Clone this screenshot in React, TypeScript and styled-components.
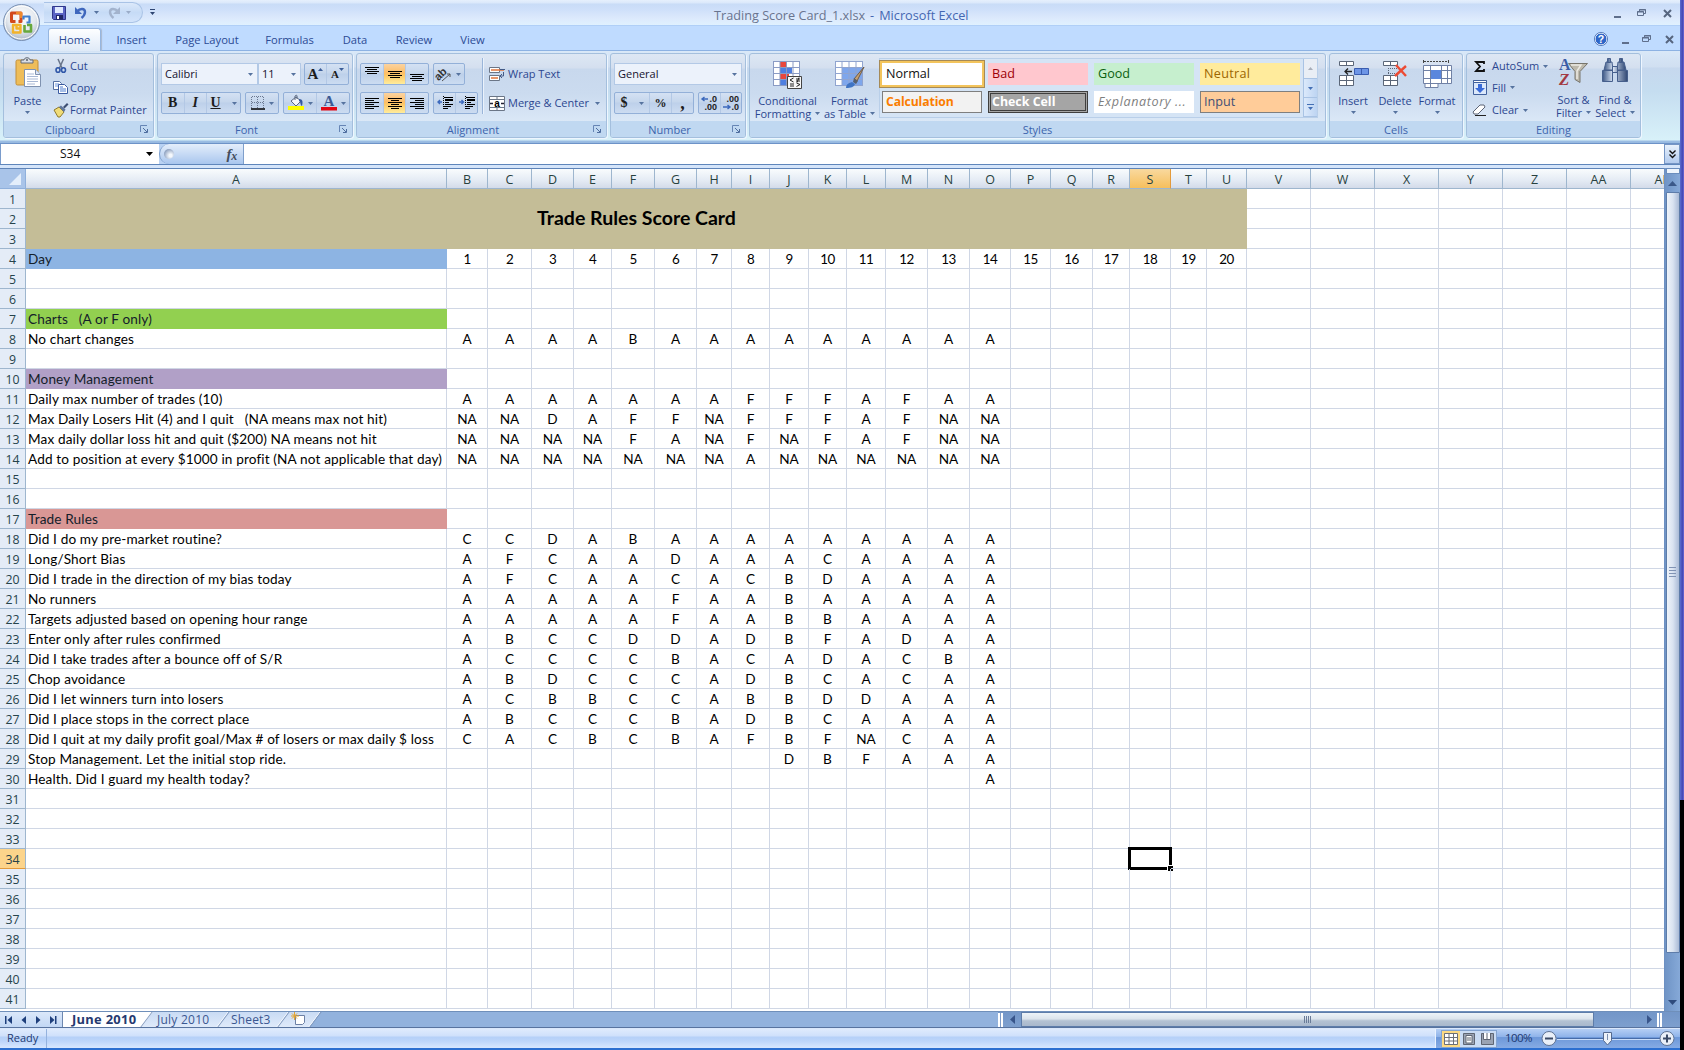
import React from "react";
import styled, { createGlobalStyle, css } from "styled-components";

const ui = '"Open Sans", "Noto Sans", sans-serif';
const calibri = 'Lato, "Open Sans", sans-serif';

const Global = createGlobalStyle`
  *, *::before, *::after { box-sizing: border-box; }
  body { margin: 0; overflow: hidden; }
  svg { display: block; flex: none; overflow: visible; }
`;

const Screen = styled.div`
  display: flex; width: 1684px; height: 1050px; overflow: hidden;
  font: 11px/14px ${ui}; color: #2c4790; background: #bfdbff; white-space: nowrap;
`;
const Edge = styled.div`
  width: 4px; height: 1050px;
  background: linear-gradient(90deg, #5c6ed0, #4549b4 60%, #6a6bd8) top / 4px 800px no-repeat, #000;
`;
const Win = styled.div`display: flex; flex-direction: column; width: 1680px; height: 1050px;`;

/* ---- title ---- */
const TitleBar = styled.header`
  position: relative; display: flex; height: 26px; border-bottom: 1px solid #b0cff7;
  background: linear-gradient(#e6f0fd 0, #dbe8fb 3px, #c9dcf7 4px, #cfe0fa 10px, #dce9fc 18px, #e0f1ff 25px);
`;
const Orb = styled.div`position: absolute; left: 1px; top: 2px; z-index: 2;`;
const Quick = styled.div`
  display: flex; align-items: center; width: 99px; height: 21px; margin: 2px 0 0 44px; padding: 0 0 0 8px;
  border: 1px solid #a9c3e6; border-left: 0; border-radius: 0 11px 11px 0;
  background: linear-gradient(#dce9fa, #c6dbf6 50%, #d3e4fb);
`;
const QuickMore = styled.div`padding: 9px 0 0 6px;`;
const Caption = styled.div`
  display: flex; gap: 5px; width: 260px; margin: 6px 0 0 558px; font-size: 12.7px; line-height: 18px; color: #69748f;
  b { font-weight: 400; color: #4467b2; }
`;
const WinButtons = styled.div<{ $top: number; $right: number; $gap: number }>`
  display: flex; gap: ${p => p.$gap}px; align-items: center; height: 14px; margin: ${p => p.$top}px ${p => p.$right}px 0 auto;
`;

/* ---- tabs ---- */
const Tabs = styled.nav`display: flex; height: 24px; padding: 2px 0 0 48px; background: #bfdbff;`;
const Tab = styled.div<{ $w: number; $on?: boolean }>`
  width: ${p => p.$w}px; height: 22px; padding-top: 4px; text-align: center; font-size: 11.2px; line-height: 15px; color: #2b4a94;
  ${p => p.$on && css`
    position: relative; z-index: 1; height: 23px; border: 1px solid #96b6e0; border-bottom: 0; border-radius: 3px 3px 0 0; padding-top: 3px;
    background: linear-gradient(#fdfeff, #eef4fc 50%, #dfeaf7); box-shadow: 1px 0 1px #a9b9d0;
  `}
`;

/* ---- ribbon ---- */
const Ribbon = styled.section`
  display: flex; gap: 3px; height: 94px; padding: 2px 0 0 3px; border-top: 1px solid #8db2e3; border-bottom: 1px solid #6d93c8;
  background: linear-gradient(#d9e8f8 0, #d0dff1 16px, #c6d8ee 17px, #c5ddf0 40px, #d8f1f9 89px, #9cbee4 90px, #93b5dd 93px);
`;
const Group = styled.div<{ $w: number }>`
  display: flex; flex-direction: column; width: ${p => p.$w}px; height: 85px; border: 1px solid #a4bfdd; border-radius: 3px;
  box-shadow: 1px 1px 0 #eef6ff; overflow: hidden;
  background: linear-gradient(#dde7f4 0, #d4dfef 14px, #c8d8ed 15px, #cbdbef 40px, #dbe8f7 68px);
`;
const GroupBody = styled.div<{ $p?: string }>`display: flex; height: 68px; padding: ${p => p.$p || "0"};`;
const GroupName = styled.div<{ $arrow?: boolean }>`
  display: flex; height: 16px; padding-right: 4px; align-items: center; line-height: 15px; color: #3c64ad; background: #c0d8f1;
  span { flex: 1; text-align: center; ${p => (p.$arrow ? "padding-right: 4px;" : "padding-left: 4px;")} }
`;
const Col = styled.div<{ $gap?: number; $w?: number; $ml?: number; $pt?: number }>`
  display: flex; flex-direction: column; gap: ${p => p.$gap || 0}px; margin-left: ${p => p.$ml || 0}px; padding-top: ${p => p.$pt || 0}px;
  ${p => p.$w && css`width: ${p.$w}px;`}
`;
const Row = styled.div<{ $gap?: number; $h?: number }>`
  display: flex; align-items: center; gap: ${p => p.$gap || 0}px; ${p => p.$h && css`height: ${p.$h}px;`}
`;
const Slot = styled.div<{ $w: number }>`display: flex; justify-content: center; width: ${p => p.$w}px;`;
const Big = styled.div<{ $w: number; $gap?: number }>`
  display: flex; flex-direction: column; align-items: center; width: ${p => p.$w}px; line-height: 13px;
  > svg:first-child { margin-bottom: ${p => p.$gap ?? 5}px; }
`;
const BigArrow = styled.div`padding-top: 4px;`;
const Combo = styled.div<{ $w: number }>`
  display: flex; align-items: center; justify-content: space-between; width: ${p => p.$w}px; height: 22px; padding: 0 4px 0 3px;
  border: 1px solid #b3c9e6; background: #ecf2fb; color: #16132e;
`;
const Cluster = styled.div<{ $w: number }>`
  display: flex; width: ${p => p.$w}px; height: 22px; border: 1px solid #93b0d8; border-radius: 2px;
  background: linear-gradient(#d4e1f3, #c5d6ec 45%, #bdd0ea 50%, #ccdcf1);
`;
const Btn = styled.div<{ $on?: boolean; $w?: number }>`
  display: flex; ${p => (p.$w ? css`width: ${p.$w}px;` : css`flex: 1;`)} align-items: center; justify-content: center; gap: 4px;
  & + & { border-left: 1px solid #b3c8e5; }
  ${p => p.$on && css`background: linear-gradient(#fbd3a0, #fdbd66 45%, #fdc765 55%, #ffec9c);`}
`;
const Glyph = styled.span<{ $i?: boolean; $u?: boolean; $s?: number }>`
  font: ${p => (p.$i ? "italic" : "normal")} bold ${p => p.$s || 14}px/16px "Liberation Serif", serif; color: #1c1c1c;
  ${p => p.$u && css`text-decoration: underline;`}
`;
const Sep = styled.div`width: 2px; height: 56px; margin: 4px 5px 0 4px; border-left: 1px solid #9ab5d9; border-right: 1px solid #eaf2fc;`;
const Gallery = styled.div`
  display: flex; height: 60px; margin: 4px 0 0; border: 1px solid #b9cfe9; background: #d5e4f5;
`;
const Swatches = styled.div`
  display: grid; grid-template-columns: repeat(4, 100px); grid-auto-rows: 22px; gap: 6px; padding: 4px 3px 4px 2px;
`;
const Swatch = styled.div<{ $bg: string; $fg: string; $kind?: string; $ls?: number }>`
  padding-left: 4px; background: ${p => p.$bg}; color: ${p => p.$fg}; font: 12.6px/21px ${ui}; letter-spacing: ${p => p.$ls || 0}px;
  ${p => p.$kind === "sel" && css`outline: 2px solid #f3c45c; box-shadow: 0 0 0 3px #a58a58;`}
  ${p => p.$kind === "box" && css`border: 1px solid #7f7f7f; padding-left: 3px; line-height: 20px;`}
  ${p => p.$kind === "calc" && css`border: 1px solid #7f7f7f; padding-left: 3px; line-height: 20px; font-weight: 700; font-size: 12.2px;`}
  ${p => p.$kind === "check" && css`border: 3px double #3f3f3f; padding-left: 1px; line-height: 15px; font-weight: 700; font-size: 12.4px;`}
  ${p => p.$kind === "em" && css`font-style: italic;`}
`;
const GalleryScroll = styled.div`
  display: grid; grid-template-rows: 20px 19px 19px; width: 14px;
  > div { display: flex; align-items: center; justify-content: center; border-left: 1px solid #a9c3e4; border-bottom: 1px solid #a9c3e4; background: linear-gradient(90deg, #dbe9fb, #bdd4f2); }
  > div:first-child { background: #e9eef5; }
`;

/* ---- formula bar ---- */
const FormulaBar = styled.div`display: flex; height: 21px; border-bottom: 1px solid #5f86bb; background: #b9d2f3;`;
const NameBox = styled.div`
  display: flex; align-items: center; width: 159px; padding: 0 6px 0 59px; justify-content: space-between; border-left: 1px solid #7a9ccc;
  background: #fff; color: #111; font-size: 12px;
`;
const FxArea = styled.div`
  display: flex; align-items: center; justify-content: space-between; width: 85px; padding: 0 6px 0 4px; border: 1px solid #7f9fcb; border-width: 0 1px 0 1px;
  border-radius: 10px 0 0 10px; background: linear-gradient(#e4eefb, #a9c6ee);
`;
const Knob = styled.div`width: 10px; height: 10px; border-radius: 50%; background: radial-gradient(circle at 65% 65%, #f4f8fd 15%, #8c9fbe 75%);`;
const Fx = styled.span`font: italic bold 15px/18px "Liberation Serif", serif; color: #454d5c; letter-spacing: -0.3px; sub { font-size: 12px; line-height: 1; vertical-align: -1px; }`;
const FormulaInput = styled.div`flex: 1; background: #fff;`;
const Expand = styled.div`
  display: flex; align-items: center; justify-content: center; width: 16px; border: 1px solid #7595c4; background: linear-gradient(#e8f1fc, #b2cbee);
`;

/* ---- sheet ---- */
const SheetArea = styled.main`display: flex; height: 846px; padding-top: 3px; background: #d5e5fa;`;
const Grid = styled.div<{ $cols: string }>`
  display: grid; grid-template-columns: ${p => p.$cols}; grid-template-rows: 20px repeat(41, 20px) 2px;
  width: 1664px; height: 843px; overflow: hidden; background: #fff; border-top: 1px solid #5f84b8;
`;
const Corner = styled.div`
  display: flex; justify-content: flex-end; align-items: flex-end; padding: 0 4px 3px 0; border: 1px solid #8fb0dc; border-width: 0 1px 1px 0; background: #a9c4e9;
`;
const ColHead = styled.div<{ $on?: boolean }>`
  border-right: 1px solid ${p => (p.$on ? "#e39a3b" : "#9eb6ce")}; border-bottom: 1px solid #9eb6ce; text-align: center; overflow: hidden;
  font: 12.5px/21px ${ui}; color: #27413e;
  background: ${p => (p.$on ? "linear-gradient(#f9d99f, #f6bf5c)" : "linear-gradient(#f9fcfd, #e4ebf4 60%, #d3dbe9)")};
`;
const RowHead = styled.div<{ $on?: boolean }>`
  border-right: 1px solid #9eb6ce; border-bottom: 1px solid ${p => (p.$on ? "#e39a3b" : "#9eb6ce")}; text-align: center;
  font: 12.3px/21px ${ui}; color: #26434b; background: ${p => (p.$on ? "#fcd48b" : "#e4ecf7")};
`;
const Banner = styled.div`
  grid-column: 2 / span 21; grid-row: 2 / span 3; display: flex; align-items: center; justify-content: center; background: #c4bd97;
  padding-bottom: 2px; color: #000; font: 700 19.5px/24px ${calibri};
`;
const Cell = styled.div<{ $bg?: string; $text?: boolean; $num?: boolean }>`
  position: relative; border-right: 1px solid #d0d7e5; border-bottom: 1px solid #d0d7e5; color: #000; font: 13.6px/20px ${calibri};
  text-align: ${p => (p.$text ? "left" : "center")}; white-space: pre;
  ${p => p.$num && css`letter-spacing: -0.6px; font-size: 13.4px;`}
  ${p => p.$text && css`padding-left: 2px; letter-spacing: 0.135px;`}
  ${p => p.$bg && css`background: ${p.$bg}; border-color: ${p.$bg}; color: #14202a;`}
`;
const Selection = styled.div`
  position: absolute; left: -2px; top: -2px; right: -2px; bottom: -2px; border: 3px solid #000;
  &::after { content: ""; position: absolute; right: -4px; bottom: -4px; width: 5px; height: 5px; background: #000; box-shadow: -1px -1px 0 #fff; }
`;
const VScroll = styled.div`
  display: flex; flex-direction: column; align-items: center; width: 16px; border-left: 1px solid #6d90c2; background: linear-gradient(90deg, #6f94c6, #86a9d8);
`;
const SplitBox = styled.div`width: 14px; height: 6px; border: 1px solid #6a8dbd; background: #eef5fd;`;
const VThumb = styled.div`
  display: flex; flex-direction: column; align-items: center; justify-content: center; gap: 1px; width: 14px; height: 761px; border: 1px solid #5d7ca9; border-radius: 1px;
  background: linear-gradient(90deg, #eef3fa, #d9e3f1 50%, #a9bad6);
`;
const GripV = styled.i`width: 7px; height: 1px; background: #8093b4; margin-bottom: 1px;`;
const ArrowBox = styled.div<{ $h: number }>`display: flex; align-items: center; height: ${p => p.$h}px;`;

/* ---- bottom ---- */
const TabStrip = styled.div`display: flex; height: 17px; border-bottom: 1px solid #58739f; border-top: 1px solid #6f8fba; background: #92b2dd;`;
const Nav = styled.div`
  display: flex; align-items: center; justify-content: space-around; width: 63px; padding: 0 2px; border-right: 1px solid #6e88b0; background: linear-gradient(#dbe8fa, #c2d7f4);
`;
const SheetTab = styled.div<{ $w: number; $on?: boolean; $z: number; $pl: number; $ls?: number }>`
  position: relative; z-index: ${p => p.$z}; width: ${p => p.$w}px; padding-left: ${p => p.$pl}px; font: ${p => (p.$on ? "700 12.9px" : "12px")}/15px ${ui};
  letter-spacing: ${p => p.$ls || 0}px; color: ${p => (p.$on ? "#25396f" : "#3b5791")};
  &::before {
    content: ""; position: absolute; z-index: -1; top: 0; bottom: 0; left: ${p => (p.$on ? 12 : -6)}px; right: 0; transform: skewX(-37deg);
    background: ${p => (p.$on ? "#fff" : "linear-gradient(#c9dbf4, #dfeafa)")}; border-right: 1px solid #7d95bb; box-shadow: ${p => (p.$on ? "none" : "inset -1px 0 0 #fff")};
  }
  ${p => p.$on && css`background: linear-gradient(#fff, #fff) 0 0 / 50px 100% no-repeat;`}
`;
const HScroll = styled.div`display: flex; align-items: center; width: 682px; margin-left: auto; background: linear-gradient(#7396c8, #7d9fce);`;
const Splitter = styled.div`width: 5px; height: 14px; border: 1px solid #fff; border-width: 0 2px; background: #7f9cc8;`;
const HTrack = styled.div`
  display: flex; align-items: center; justify-content: center; gap: 1px; width: 573px; height: 15px; border: 1px solid #5d7ca9;
  background: linear-gradient(#edf3f8, #dce4ec 45%, #b4c2d3 60%, #a9b8cc);
`;
const GripH = styled.i`width: 1px; height: 7px; background: #697b97;`;
const Gap = styled.div<{ $w: number }>`display: flex; justify-content: center; width: ${p => p.$w}px;`;
const StatusBar = styled.footer`
  display: flex; height: 22px; border-bottom: 2px solid #2c6fd0; border-top: 1px solid #dbe8fb;
  background: linear-gradient(#dfebfd 0, #cfe0fb 7px, #b5d0f8 8px, #bcd5fa 12px, #d8e7fe 19px);
`;
const Ready = styled.div`width: 47px; padding: 1px 0 0 7px; border-right: 1px solid #94b2de; color: #1d3a72; line-height: 15px;`;
const StatusRight = styled.div`
  display: flex; align-items: center; width: 245px; margin-left: auto; padding-left: 5px; border-left: 1px solid #e9f2ff;
  background: linear-gradient(#b5cff5, #90b4ea 40%, #6d98d9 45%, #86abe4);
`;
const Views = styled.div`display: flex; width: 56px; height: 18px; border: 1px solid #83a3d0; background: #cadcf4;`;
const View = styled.div<{ $on?: boolean }>`display: flex; flex: 1; align-items: center; justify-content: center; ${p => p.$on && css`background: #fbd983;`}`;
const Zoom = styled.div`width: 43px; padding-left: 8px; color: #1c3870; font-size: 11.5px; line-height: 14px; padding-bottom: 1px; letter-spacing: -0.6px;`;

/* ---- icons ---- */
const Dn = ({ c = "#56739f", s = 5 }: { c?: string; s?: number }) => (
  <svg width={s} height={Math.ceil(s / 2)} viewBox="0 0 6 3" preserveAspectRatio="none"><path d="M0 0h6L3 3z" fill={c} /></svg>
);
const Launch = () => (
  <svg width="9" height="9" fill="none" stroke="#6685b5"><path d="M.5 7V.5H7" /><path d="M3 3l4 4M7.500 4v3.500H4" stroke="#4e6d9f" /></svg>
);
const WinSet = () => (<>
  <svg width="8" height="10"><path d="M1 8h7v2H1z" fill="#5f6f8c" /></svg>
  <svg width="10" height="9" fill="none" stroke="#5f6f8c"><path d="M2.500 2V.5h6v4H7" /><path d="M.5 2.500h6v4h-6z" /><path d="M0 3h7M2 1h7" /></svg>
  <svg width="9" height="9" stroke="#56657f" strokeWidth="2"><path d="M1 1l7 7M8 1L1 8" /></svg>
</>);
const OrbIcon = () => (
  <svg width="40" height="40">
    <defs><radialGradient id="orb" cx=".5" cy=".35" r=".65"><stop offset="0" stopColor="#fff" /><stop offset=".6" stopColor="#e3e8ee" /><stop offset="1" stopColor="#a9b5c4" /></radialGradient></defs>
    <circle cx="20.500" cy="20.500" r="18" fill="url(#orb)" stroke="#7890b4" />
    <circle cx="20.500" cy="20.500" r="16.500" fill="none" stroke="#fff" />
    <g fill="none" strokeLinejoin="round">
      <path d="M14.500 19.500h-4v-8.500h9.500v8.500h-2.500" stroke="#d2481d" strokeWidth="3" /><path d="M15 11h5v5" stroke="#ee8a2c" strokeWidth="2.400" />
      <path d="M22.500 17.500v-3h6v6h-3" stroke="#3f7fd0" strokeWidth="2.200" />
      <path d="M12 23h7.500v7.500H12zM15.500 23v3.500H20" stroke="#f2b32b" strokeWidth="2.400" /><path d="M23.500 23v6.500h6.500V23h-4" stroke="#67a83c" strokeWidth="2.600" />
    </g>
  </svg>
);
const Save = () => (
  <svg width="14" height="14"><path d="M.5.5h13v13h-12l-1-1z" fill="#5a64c4" stroke="#30388c" /><path d="M3 1h8v6H3z" fill="#dfe9ff" /><path d="M4 9h7v4.500H4z" fill="#1f2766" /><path d="M5 10h2v3H5z" fill="#fff" /></svg>
);
const Undo = ({ c, flip }: { c: string; flip?: boolean }) => (
  <svg width="14" height="13"><g transform={flip ? "translate(14 0) scale(-1 1)" : undefined}><path d="M3 5.500C6 2 11 2 11 6c0 2-1 4-3.500 6" fill="none" stroke={c} strokeWidth="2.400" /><path d="M1 1v7h7z" fill={c} /></g></svg>
);
const PasteIcon = () => (
  <svg width="28" height="31"><rect x="2" y="3" width="22" height="25" rx="1.500" fill="#eebd59" stroke="#c28f3a" /><path d="M7 6V3h3c0-3 6-3 6 0h3v3z" fill="#d9dde3" stroke="#626b78" /><circle cx="13" cy="3" r="1" fill="#59616e" />
    <path d="M10.500 12.500h11l5 5v12h-16z" fill="#fff" stroke="#7f92b0" /><path d="M21.500 12.500v5h5" fill="#dbe5f5" stroke="#7f92b0" /><path d="M13 17h7M13 19.500h11M13 22h11M13 24.500h11M13 27h8" stroke="#a9b9d5" /></svg>
);
const CutIcon = () => (
  <svg width="12" height="14" fill="none"><path d="M3 0l4 9M8.500 0L4.500 9" stroke="#69758a" strokeWidth="1.500" /><ellipse cx="3" cy="11" rx="2" ry="2.300" stroke="#3057a8" strokeWidth="1.600" /><ellipse cx="8.500" cy="11" rx="2" ry="2.300" stroke="#3057a8" strokeWidth="1.600" /></svg>
);
const CopyIcon = () => (
  <svg width="15" height="13"><path d="M.5.5h6l2 2v6h-8z" fill="#fff" stroke="#5470a3" /><path d="M2 3h4M2 5h3" stroke="#6f97dc" /><path d="M5.500 3.500h6l3 3v6h-9z" fill="#fff" stroke="#3a5aa0" /><path d="M7 6h3M7 8h6M7 10h6" stroke="#4f7ed0" /></svg>
);
const BrushIcon = () => (
  <svg width="16" height="14"><path d="M1 7l5-3 5 5-4 5H5z" fill="#f0dc78" stroke="#8e7a2d" /><path d="M6 4l2-1.500 4.500 4L11 9z" fill="#61779d" /><path d="M10 4l4-4 1.500 1.500-4 4z" fill="#3d4e72" /></svg>
);
const BorderIcon = () => (
  <svg width="14" height="14" stroke="#6b7890"><path d="M1 .5h12M1 6.500h12M.5 1v11M6.500 1v11M12.500 1v11" strokeDasharray="1 1" /><path d="M0 13h14" strokeWidth="1.500" stroke="#000" /></svg>
);
const BucketIcon = () => (
  <svg width="16" height="16"><path d="M3 6l5-4 5 4-5 5z" fill="#f4f6fa" stroke="#59667f" /><path d="M7 5V1c1-1 2-1 2 0v3" fill="none" stroke="#59667f" /><path d="M11 4c4 0 4 3 3 7-2-1-1-4-3-5z" fill="#34589f" /><path d="M0 11h16v4H0z" fill="#ff0" /></svg>
);
const FontColor = () => (
  <svg width="16" height="16"><text x="8" y="11" textAnchor="middle" fontFamily="Liberation Serif" fontWeight="700" fontSize="15" fill="#3c5a93">A</text><path d="M0 12h16v3.500H0z" fill="#e30613" /></svg>
);
const Lines = ({ rows, y = 0 }: { rows: [number, number][]; y?: number }) => (
  <svg width="14" height="15" stroke="#000">{rows.map(([a, b], i) => <path key={i} d={`M${a} ${y + i * 2 + 0.5}H${b}`} />)}</svg>
);
const full: [number, number] = [0, 14];
const shortRow: [number, number] = [2, 12];
const Indent = ({ right }: { right?: boolean }) => (
  <svg width="16" height="14"><path d="M7 1h9v1H7zM8 3h8v2H8zM8 6h4v1H8zM8 8h8v1H8zM7 10h7v1H7zM7 12h4v1H7z" fill="#000" /><path d="M6.500 0v14" stroke="#000" strokeDasharray="1 1" /><path d={right ? "M0 6h4M2.500 4L4.500 6 2.500 8" : "M1 6h4M3 4L1 6l2 2"} stroke="#3c69bd" strokeWidth="1.400" fill="none" /></svg>
);
const OrientIcon = () => (
  <svg width="15" height="15"><text x="-2" y="10" transform="rotate(-45 5 8)" fontFamily="Liberation Sans" fontWeight="700" fontSize="11" fill="#333">ab</text><path d="M5 14l8-7M10 7h3v3" fill="none" stroke="#555" /></svg>
);
const WrapIcon = () => (
  <svg width="16" height="15"><path d="M.5.500h10v5H.5zM.5 8.500h10v5H.5z" fill="#fff" stroke="#6b7687" /><path d="M2 3h13M2 11h7" stroke="#e0743c" strokeWidth="1.500" /><path d="M11 2.500h5M14.500 5v4h-3M13 7l-2 2 2 2" fill="none" stroke="#445a86" /></svg>
);
const MergeIcon = () => (
  <svg width="16" height="15"><path d="M.5.500h15v14H.5z" fill="#fff" stroke="#6b7687" /><path d="M0 3.500h16M0 11.500h16M8 0v3M8 12v3" stroke="#6b7687" /><text x="8" y="10.500" textAnchor="middle" fontFamily="Liberation Sans" fontWeight="700" fontSize="10" fill="#000">a</text><path d="M1 7.500h3M12 7.500h3" stroke="#223" strokeWidth="1.500" /></svg>
);
const Decimals = ({ a, b, left }: { a: string; b: string; left?: boolean }) => (
  <svg width="18" height="16"><g fontFamily="Liberation Sans" fontWeight="700" fontSize="9" fill="#222"><text x="17" y="7" textAnchor="end">{a}</text><text x="17" y="15" textAnchor="end">{b}</text></g>
    <path d={left ? "M2 4h6M4.500 2L2 4l2.500 2" : "M1 12h7M5.500 10L8 12l-2.500 2"} fill="none" stroke="#3c69bd" strokeWidth="1.400" /></svg>
);
const CondIcon = () => (
  <svg width="31" height="29"><path d="M1.500 1.500h26v24h-26z" fill="#fff" /><path d="M8 1h6v6H8zM8 13h9v6H8z" fill="#e8473c" /><path d="M8 7h12v6H8zM8 19h7v6H8z" fill="#4f7fe0" /><path d="M1.500 1v25M8 1v25M14.500 1v25M21 1v25M27.500 1v25M1 1.500h27M1 7.500h27M1 13.500h27M1 19.500h27M1 25.500h27" stroke="#8a9bc4" fill="none" />
    <path d="M15.500 16.500h14v12h-14z" fill="#f7f7f7" stroke="#444" /><path d="M21.500 18l-3.500 2 3.500 2M18 24h4M18 26h4M24 19h4M24 21h4M27 17.500l-2 5M24.500 23l3.500 1.500-3.500 2" fill="none" stroke="#222" /></svg>
);
const TableIcon = () => (
  <svg width="31" height="29"><path d="M1.500 1.500h27v24h-27z" fill="#fff" /><path d="M8 7h20v18H8z" fill="#7ea6ec" /><path d="M1.500 1v25M8 1v25M15 1v25M22 1v25M28.500 1v25M1 1.500h28M1 7.500h28M1 13.500h28M1 19.500h28M1 25.500h28" stroke="#90a4cf" fill="none" />
    <path d="M30 7L20 19l3 2z" fill="#c7a172" stroke="#6f5b45" /><path d="M20 18l4 3-2 3-3-2z" fill="#555f6e" /><path d="M12 28c0-4 3-5 6-6l3 2c-1 3-4 4-9 4z" fill="#3f74c4" /></svg>
);
const InsertIcon = () => (
  <svg width="31" height="27" fill="#fff" stroke="#5b6678"><path d="M1.500 1.500h14v4h-14zM8.500 1v5M1.500 15.500h14v10h-14zM8.500 15v11M1 20.500h15" /><path d="M16.500 8.500h14v6h-14z" fill="#6d95e6" stroke="#3a5db0" /><path d="M23.500 8v7" stroke="#3a5db0" /><path d="M7 11.500h7M10 8.500l-3 3 3 3" fill="none" stroke="#222" strokeWidth="1.300" /></svg>
);
const DeleteIcon = () => (
  <svg width="26" height="27" fill="#fff" stroke="#5b6678"><path d="M1.500 1.500h14v4h-14zM8.500 1v5M1.500 15.500h14v10h-14zM8.500 15v11M1 20.500h15" /><path d="M6 8.500h9M6 13.500h9M6.500 8v6" strokeDasharray="1 1" /><path d="M14 5l10 11M24 6L13 16" stroke="#ec4b34" strokeWidth="2.400" /></svg>
);
const FormatIcon = () => (
  <svg width="31" height="30" fill="#fff" stroke="#7081a5"><path d="M1.500 5.500h28v18h-28zM3 23.500h13v4H3zM1 10.500h29M1 18.500h29M8.500 5v22M19.500 5v19M25.500 5v19" /><path d="M9 10h10v9H9z" fill="#5b87dd" stroke="none" /><path d="M2 1.500h24" stroke="#444" strokeDasharray="2 1" /><path d="M1.500 0v3M26.500 0v3" stroke="#444" /></svg>
);
const SumIcon = () => <svg width="10" height="11"><path d="M9 3V1H1l4 4.500L1 10h8V8" fill="none" stroke="#111" strokeWidth="1.800" /></svg>;
const FillIcon = () => <svg width="14" height="15"><path d="M.5.5h13v14H.5z" fill="#dbe8fb" stroke="#41619e" /><path d="M.5.500h13v2H.5z" fill="#fff" stroke="#41619e" /><path d="M5 4h4v4h3l-5 5-5-5h3z" fill="#3a6bd8" /></svg>;
const ClearIcon = () => <svg width="15" height="12"><path d="M1 8l7-7h4l1 2-7 7H2z" fill="#fff" stroke="#5c6577" /><path d="M6 10l7-7" stroke="#5c6577" /><path d="M3 11.500h11" stroke="#222" /></svg>;
const SortIcon = () => (
  <svg width="32" height="31"><text x="1" y="13" fontFamily="Liberation Serif" fontWeight="700" fontSize="16" fill="#3b5da6">A</text><text x="1" y="28" fontFamily="Liberation Serif" fontStyle="italic" fontWeight="700" fontSize="17" fill="#a33a42">Z</text>
    <path d="M10.500 6.500h19l-7.500 8v11l-5-3v-8z" fill="#bdb9ac" stroke="#77756c" /><path d="M13 8h10l-4 6v8" fill="none" stroke="#eceae3" strokeWidth="1.500" /></svg>
);
const FindIcon = () => (
  <svg width="28" height="27"><defs><linearGradient id="bn"><stop offset="0" stopColor="#3b5684" /><stop offset=".4" stopColor="#d5e1f2" /><stop offset="1" stopColor="#2e4673" /></linearGradient></defs>
    <g fill="url(#bn)" stroke="#465f8c"><path d="M5 5h6l1 8H3zM17 5h6l2 8h-9z" /><path d="M1.500 13.500h10v11h-10zM16.500 13.500h10v11h-10z" /><path d="M6.500 1.500h3v4h-3zM18.500 1.500h3v4h-3zM11.500 9.500h5v6h-5z" /></g></svg>
);
const Help = () => <svg width="14" height="14"><circle cx="7" cy="7" r="6" fill="#2f66c8" stroke="#fff" /><circle cx="7" cy="7" r="6.600" fill="none" stroke="#3f67ad" strokeWidth=".8" /><text x="7" y="11" textAnchor="middle" fontFamily="Liberation Sans" fontWeight="700" fontSize="10.500" fill="#fff">?</text></svg>;
const NavIcon = ({ d }: { d: string }) => <svg width="8" height="8"><path d={d} fill="#1e3f7c" /></svg>;

/* ---- data ---- */
const edges = [26, 447, 488, 532, 574, 612, 655, 697, 732, 770, 809, 847, 886, 928, 970, 1011, 1051, 1093, 1130, 1171, 1207, 1247, 1311, 1375, 1439, 1503, 1567, 1631, 1695];
const names = "A B C D E F G H I J K L M N O P Q R S T U V W X Y Z AA AB".split(" ");
const cols = ["26px", ...edges.slice(1).map((e, i) => `${e - edges[i]}px`)].join(" ");
const labels: Record<number, [string, string?]> = {
  4: ["Day", "#8db4e3"], 7: ["Charts   (A or F only)", "#92d050"], 8: ["No chart changes"], 10: ["Money Management", "#b1a0c7"],
  11: ["Daily max number of trades (10)"], 12: ["Max Daily Losers Hit (4) and I quit   (NA means max not hit)"],
  13: ["Max daily dollar loss hit and quit ($200) NA means not hit"], 14: ["Add to position at every $1000 in profit (NA not applicable that day)"],
  17: ["Trade Rules", "#d99795"], 18: ["Did I do my pre-market routine?"], 19: ["Long/Short Bias"], 20: ["Did I trade in the direction of my bias today"],
  21: ["No runners"], 22: ["Targets adjusted based on opening hour range"], 23: ["Enter only after rules confirmed"],
  24: ["Did I take trades after a bounce off of S/R"], 25: ["Chop avoidance"], 26: ["Did I let winners turn into losers"],
  27: ["Did I place stops in the correct place"], 28: ["Did I quit at my daily profit goal/Max # of losers or max daily $ loss"],
  29: ["Stop Management. Let the initial stop ride."], 30: ["Health. Did I guard my health today?"],
};
const grades: Record<number, string> = {
  4: "1 2 3 4 5 6 7 8 9 10 11 12 13 14 15 16 17 18 19 20",
  8: "A A A A B A A A A A A A A A", 11: "A A A A A A A F F F A F A A", 12: "NA NA D A F F NA F F F A F NA NA",
  13: "NA NA NA NA F A NA F NA F A F NA NA", 14: "NA NA NA NA NA NA NA A NA NA NA NA NA NA",
  18: "C C D A B A A A A A A A A A", 19: "A F C A A D A A A C A A A A", 20: "A F C A A C A C B D A A A A",
  21: "A A A A A F A A B A A A A A", 22: "A A A A A F A A B B A A A A", 23: "A B C C D D A D B F A D A A",
  24: "A C C C C B A C A D A C B A", 25: "A B D C C C A D B C A C A A", 26: "A C B B C C A B B D D A A A",
  27: "A B C C C B A D B C A A A A", 28: "C A C B C B A F B F NA C A A", 29: ". . . . . . . . D B F A A A", 30: ". . . . . . . . . . . . . A",
};

const Sheet = () => (
  <Grid $cols={cols}>
    <Corner><svg width="12" height="12"><path d="M12 0v12H0z" fill="#e3eefb" /></svg></Corner>
    {names.map(n => <ColHead key={n} $on={n === "S"}>{n}</ColHead>)}
    <Banner>Trade Rules Score Card</Banner>
    {Array.from({ length: 41 }, (_, i) => i + 1).map(r => {
      const g = (grades[r] || "").split(" ");
      return (
        <React.Fragment key={r}>
          <RowHead $on={r === 34} style={{ gridRow: r + 1, gridColumn: 1 }}>{r}</RowHead>
          {names.map((n, c) => {
            if (r < 4 && c < 21) return null;
            const at = { gridRow: r + 1, gridColumn: c + 2 };
            if (c === 0) return <Cell key={n} $text $bg={labels[r]?.[1]} style={at}>{labels[r]?.[0]}</Cell>;
            const v = g[c - 1];
            return <Cell key={n} $num={r === 4} style={at}>{v && v !== "." ? v : null}{r === 34 && n === "S" && <Selection />}</Cell>;
          })}
        </React.Fragment>
      );
    })}
  </Grid>
);

const Name = ({ children, arrow = true }: { children: string; arrow?: boolean }) => (
  <GroupName $arrow={arrow}><span>{children}</span>{arrow && <Launch />}</GroupName>
);

export default function App() {
  return (
    <Screen>
      <Global />
      <Win>
        <TitleBar>
          <Orb><OrbIcon /></Orb>
          <Quick>
            <Row $gap={8}><Save /><Row $gap={6}><Undo c="#3f67bd" /><Dn /></Row><Row $gap={5}><Undo c="#a3b3cd" flip /><Dn c="#9aacc8" /></Row></Row>
          </Quick>
          <QuickMore><svg width="7" height="7"><path d="M1 0h5v1H1zM1 3h5L3.500 6z" fill="#2f4673" /></svg></QuickMore>
          <Caption><span>Trading Score Card_1.xlsx</span><b>-</b><b>Microsoft Excel</b></Caption>
          <WinButtons $top={6} $right={8} $gap={16}><WinSet /></WinButtons>
        </TitleBar>
        <Tabs>
          <Tab $w={53} $on>Home</Tab><Tab $w={61}>Insert</Tab><Tab $w={90}>Page Layout</Tab><Tab $w={75}>Formulas</Tab>
          <Tab $w={56}>Data</Tab><Tab $w={62}>Review</Tab><Tab $w={55}>View</Tab>
          <WinButtons $top={4} $right={6} $gap={13}><Help /><WinSet /></WinButtons>
        </Tabs>
        <Ribbon>
          <Group $w={151}>
            <GroupBody $p="3px 0 0 5px">
              <Big $w={37} $gap={6}><PasteIcon /><span>Paste</span><BigArrow><Dn /></BigArrow></Big>
              <Col $ml={5}>
                <Row $h={18}><Slot $w={19}><CutIcon /></Slot><span>Cut</span></Row>
                <Row $h={25}><Slot $w={19}><CopyIcon /></Slot><span>Copy</span></Row>
                <Row $h={20}><Slot $w={19}><BrushIcon /></Slot><span>Format Painter</span></Row>
              </Col>
            </GroupBody>
            <Name>Clipboard</Name>
          </Group>
          <Group $w={196}>
            <GroupBody $p="9px 0 0 3px">
              <Col $gap={7}>
                <Row>
                  <Combo $w={97}>Calibri<Dn /></Combo><Combo $w={43}>11<Dn /></Combo><Gap $w={3} />
                  <Cluster $w={45}><Btn><Row><Glyph $s={15}>A</Glyph><svg width="5" height="12"><path d="M0 3h5L2.500 0z" fill="#3b5d99" /></svg></Row></Btn><Btn><Row><Glyph $s={11}>A</Glyph><svg width="5" height="12"><path d="M0 0h5L2.500 3z" fill="#3b5d99" /></svg></Row></Btn></Cluster>
                </Row>
                <Row $gap={4}>
                  <Cluster $w={80}><Btn><Glyph>B</Glyph></Btn><Btn><Glyph $i>I</Glyph></Btn><Btn $w={34}><Glyph $u>U</Glyph><Gap $w={3} /><Dn /></Btn></Cluster>
                  <Cluster $w={34}><Btn><BorderIcon /><Dn /></Btn></Cluster>
                  <Cluster $w={67}><Btn><BucketIcon /><Dn /></Btn><Btn><FontColor /><Dn /></Btn></Cluster>
                </Row>
              </Col>
            </GroupBody>
            <Name>Font</Name>
          </Group>
          <Group $w={251}>
            <GroupBody $p="0 0 0 3px">
              <Col $gap={7} $pt={9}>
                <Row $gap={4}>
                  <Cluster $w={69}><Btn><Lines rows={[full, shortRow, full, shortRow]} /></Btn><Btn $on><Lines y={4} rows={[full, shortRow, full, shortRow]} /></Btn><Btn><Lines y={7} rows={[full, shortRow, full, shortRow]} /></Btn></Cluster>
                  <Cluster $w={32}><Btn><OrientIcon /><Dn /></Btn></Cluster>
                </Row>
                <Row $gap={4}>
                  <Cluster $w={69}>
                    <Btn><Lines y={2} rows={[full, [0, 9], full, [0, 9], full, [0, 9]]} /></Btn>
                    <Btn $on><Lines y={2} rows={[full, [3, 11], full, [3, 11], full, [3, 11]]} /></Btn>
                    <Btn><Lines y={2} rows={[full, [5, 14], full, [5, 14], full, [5, 14]]} /></Btn>
                  </Cluster>
                  <Cluster $w={45}><Btn><Indent /></Btn><Btn><Indent right /></Btn></Cluster>
                </Row>
              </Col>
              <Sep />
              <Col>
                <Row $h={40} $gap={3}><WrapIcon /><span>Wrap Text</span></Row>
                <Row $h={18} $gap={3}><MergeIcon /><span>Merge &amp; Center</span><Gap $w={0} /><Dn /></Row>
              </Col>
            </GroupBody>
            <Name>Alignment</Name>
          </Group>
          <Group $w={136}>
            <GroupBody $p="9px 0 0 3px">
              <Col $gap={7}>
                <Combo $w={128}>General<Dn /></Combo>
                <Row $gap={4}>
                  <Cluster $w={80}><Btn $w={34}><Glyph>$</Glyph><Gap $w={3} /><Dn /></Btn><Btn><Glyph $s={12}>%</Glyph></Btn><Btn><Glyph $s={18}>,</Glyph></Btn></Cluster>
                  <Cluster $w={44}><Btn><Decimals a=".0" b=".00" left /></Btn><Btn><Decimals a=".00" b=".0" /></Btn></Cluster>
                </Row>
              </Col>
            </GroupBody>
            <Name>Number</Name>
          </Group>
          <Group $w={577}>
            <GroupBody>
              <Col $w={75} $pt={6}><Big $w={75}><CondIcon /><span>Conditional</span><Row $gap={4}>Formatting<Dn /></Row></Big></Col>
              <Col $w={54} $pt={6}><Big $w={49}><TableIcon /><span>Format</span><Row $gap={4}>as Table<Dn /></Row></Big></Col>
              <Gallery>
                <Swatches>
                  <Swatch $bg="#fff" $fg="#111" $kind="sel">Normal</Swatch><Swatch $bg="#ffc7ce" $fg="#9c0006">Bad</Swatch>
                  <Swatch $bg="#c6efce" $fg="#0b6110">Good</Swatch><Swatch $bg="#ffeb9c" $fg="#9c6500" $ls={0.3}>Neutral</Swatch>
                  <Swatch $bg="#f2f2f2" $fg="#fa7d00" $kind="calc" $ls={-0.1}>Calculation</Swatch><Swatch $bg="#a5a5a5" $fg="#fff" $kind="check" $ls={0}>Check Cell</Swatch>
                  <Swatch $bg="#fff" $fg="#7f7f7f" $kind="em" $ls={0.6}>Explanatory ...</Swatch><Swatch $bg="#ffcc99" $fg="#3f4f76" $kind="box">Input</Swatch>
                </Swatches>
                <GalleryScroll>
                  <div><svg width="5" height="3"><path d="M0 3h5L2.500 0z" fill="#a8aeb9" /></svg></div><div><Dn c="#4470b5" /></div>
                  <div><svg width="7" height="7"><path d="M0 0h7v1H0zM1 3h5L3.500 6z" fill="#4470b5" /></svg></div>
                </GalleryScroll>
              </Gallery>
            </GroupBody>
            <Name arrow={false}>Styles</Name>
          </Group>
          <Group $w={134}>
            <GroupBody $p="6px 0 0 2px">
              <Big $w={42} $gap={7}><InsertIcon /><span>Insert</span><BigArrow><Dn /></BigArrow></Big>
              <Big $w={42} $gap={7}><DeleteIcon /><span>Delete</span><BigArrow><Dn /></BigArrow></Big>
              <Big $w={42} $gap={4}><FormatIcon /><span>Format</span><BigArrow><Dn /></BigArrow></Big>
            </GroupBody>
            <Name arrow={false}>Cells</Name>
          </Group>
          <Group $w={175}>
            <GroupBody $p="3px 0 0 4px">
              <Col $w={82}>
                <Row $h={18} $gap={4}><Slot $w={17}><SumIcon /></Slot><span>AutoSum</span><Dn /></Row>
                <Row $h={25} $gap={4}><Slot $w={17}><FillIcon /></Slot><span>Fill</span><Dn /></Row>
                <Row $h={20} $gap={4}><Slot $w={17}><ClearIcon /></Slot><span>Clear</span><Dn /></Row>
              </Col>
              <Big $w={41}><SortIcon /><span>Sort &amp;</span><Row $gap={4}>Filter<Dn /></Row></Big>
              <Big $w={42} $gap={9}><FindIcon /><span>Find &amp;</span><Row $gap={4}>Select<Dn /></Row></Big>
            </GroupBody>
            <Name arrow={false}>Editing</Name>
          </Group>
        </Ribbon>
        <FormulaBar>
          <NameBox>S34<Dn c="#000" s={7} /></NameBox>
          <FxArea><Knob /><Fx>f<sub>x</sub></Fx></FxArea>
          <FormulaInput />
          <Expand><svg width="7" height="8" fill="none" stroke="#111" strokeWidth="1.400"><path d="M.5.500l3 3 3-3M.5 4.500l3 3 3-3" /></svg></Expand>
        </FormulaBar>
        <SheetArea>
          <Sheet />
          <VScroll>
            <SplitBox />
            <ArrowBox $h={18}><svg width="9" height="5"><path d="M0 5h9L4.500 0z" fill="#3b5889" /></svg></ArrowBox>
            <VThumb><GripV /><GripV /><GripV /><GripV /></VThumb>
            <ArrowBox $h={47} />
            <Dn s={9} c="#2f4b7c" />
          </VScroll>
        </SheetArea>
        <TabStrip>
          <Nav><NavIcon d="M0 0h1.500v8H0zM7 0v8L2.500 4z" /><NavIcon d="M6 0v8L1.500 4z" /><NavIcon d="M2 0v8L6.500 4z" /><NavIcon d="M6 0h1.500v8H6zM1 0v8L5.500 4z" /></Nav>
          <SheetTab $w={84} $on $z={5} $pl={9} $ls={0.3}>June 2010</SheetTab>
          <SheetTab $w={77} $z={4} $pl={10} $ls={0.25}>July 2010</SheetTab>
          <SheetTab $w={60} $z={3} $pl={7} $ls={0.15}>Sheet3</SheetTab>
          <SheetTab $w={32} $z={2} $pl={7}><svg width="15" height="13"><path d="M4.500 3.500h9v7l-2 2h-7z" fill="#fff" stroke="#6c80a5" /><path d="M3.500 0v8M0 4h8M1 1.500l5 5M6 1.500l-5 5" stroke="#e5a52f" /></svg></SheetTab>
          <HScroll>
            <Splitter /><Gap $w={18}><svg width="5" height="9"><path d="M5 0v9L0 4.500z" fill="#38558a" /></svg></Gap>
            <HTrack><GripH /><GripH /><GripH /><GripH /></HTrack>
            <Gap $w={47} /><Gap $w={16}><svg width="5" height="9"><path d="M0 0v9l5-4.500z" fill="#38558a" /></svg></Gap><Splitter />
          </HScroll>
        </TabStrip>
        <StatusBar>
          <Ready>Ready</Ready>
          <StatusRight>
            <Views>
              <View $on><svg width="14" height="12" fill="#fff" stroke="#6b6f77"><path d="M.5.500h13v11H.5zM0 4.500h14M0 8h14M5 0v12M9.500 0v12" /></svg></View>
              <View><svg width="12" height="12" stroke="#5f6673"><path d="M.5.500h11v11H.5z" fill="#9aa3b3" /><path d="M3 2.500h6v7.500H3z" fill="#fff" /><path d="M4 5h4M4 7h4" /></svg></View>
              <View><svg width="13" height="12" stroke="#5f6673"><path d="M.5.500h12v11H.5z" fill="#9aa3b3" /><path d="M2.500 0v6.500h7V0M6 0v6" fill="#fff" /></svg></View>
            </Views>
            <Zoom>100%</Zoom>
            <svg width="138" height="19">
              <path d="M17 9.500h104" stroke="#476ca8" /><path d="M17 10.500h104" stroke="#c9ddf9" />
              <g fill="#e9eff8" stroke="#5f7394"><circle cx="9" cy="9.500" r="7" /><circle cx="127" cy="9.500" r="7" /></g>
              <path d="M5 9.500h8M123 9.500h8M127 5.500v8" stroke="#3b4a66" strokeWidth="2" />
              <path d="M63.500 3.500h8v8l-4 4.500-4-4.500z" fill="#edf2f9" stroke="#54698e" /><path d="M67.500 5v6" stroke="#7b8eae" />
            </svg>
          </StatusRight>
        </StatusBar>
      </Win>
      <Edge />
    </Screen>
  );
}
